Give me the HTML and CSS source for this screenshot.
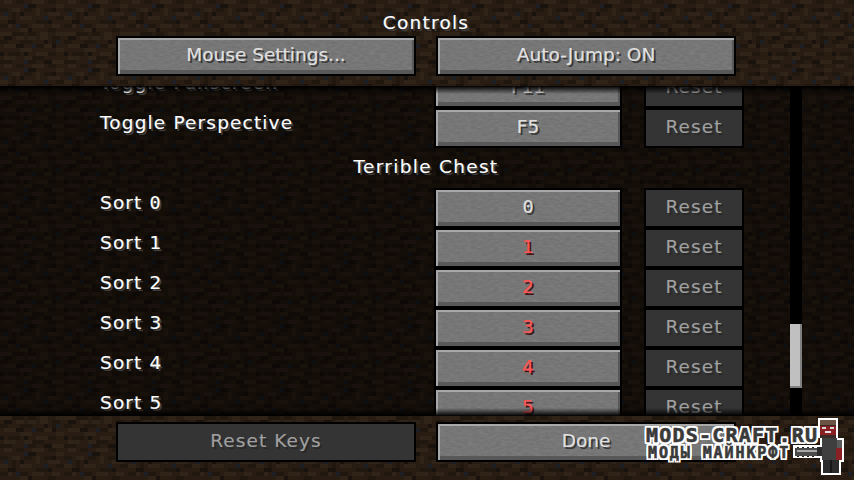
FILE: index.html
```html
<!DOCTYPE html>
<html lang="en">
  <head>
    <meta charset="UTF-8" />
    <title>Controls</title>
    <link rel="stylesheet" href="styles.css">
  </head>

  <body>
    <!-- 16x16 dirt tile, each cell is 4px on screen -->
    <svg class="dirt" width="854" height="480" aria-hidden="true">
      <defs>
        <pattern id="dirt-tile" width="64" height="64" patternUnits="userSpaceOnUse">
          <g transform="scale(4)" shape-rendering="crispEdges">
            <rect width="16" height="16" fill="#281c13" />
            <path fill="#302318" d="M1 0h2v1h-2zM8 0h3v1h-3zM14 1h2v1h-2zM3 2h2v1h-2zM9 2h1v2h-1zM12 3h3v1h-3zM0 4h2v1h-2zM5 4h3v1h-3zM2 6h1v1h-1zM8 6h3v1h-3zM13 6h2v1h-2zM5 7h2v1h-2zM0 8h3v1h-3zM10 8h2v2h-2zM14 8h2v1h-2zM4 9h2v1h-2zM7 9h2v1h-2zM1 11h3v1h-3zM11 11h2v1h-2zM5 12h3v1h-3zM14 12h2v1h-2zM9 13h3v1h-3zM1 14h3v1h-3zM6 14h2v1h-2zM13 15h3v1h-3z" />
            <path fill="#20170f" d="M4 0h2v1h-2zM12 0h2v1h-2zM0 2h2v1h-2zM6 2h2v1h-2zM11 2h2v1h-2zM3 3h1v2h-1zM14 4h2v1h-2zM9 5h3v1h-3zM0 6h2v1h-2zM5 6h2v1h-2zM12 7h2v1h-2zM3 8h3v1h-3zM7 8h2v1h-2zM13 9h2v2h-2zM0 10h2v1h-2zM5 10h3v1h-3zM9 11h2v1h-2zM2 13h3v1h-3zM12 13h2v1h-2zM8 14h3v1h-3zM0 15h3v1h-3zM7 15h2v1h-2z" />
            <path fill="#1a120c" d="M7 1h2v1h-2zM13 2h1v1h-1zM5 3h1v1h-1zM2 5h2v1h-2zM12 5h1v1h-1zM7 7h1v1h-1zM1 9h2v1h-2zM11 10h1v1h-1zM4 11h2v1h-2zM13 11h1v1h-1zM0 13h1v1h-1zM6 13h1v1h-1zM11 15h2v1h-2z" />
            <path fill="#1c1f25" d="M6 1h1v1h-1zM1 3h1v1h-1zM11 4h1v1h-1zM4 6h1v1h-1zM14 10h1v1h-1zM8 11h1v1h-1zM6 15h1v1h-1z" />
          </g>
        </pattern>
        <!-- stone mottling for the enabled buttons -->
        <filter id="stone-grain" x="0" y="0" width="100%" height="100%">
          <feTurbulence type="fractalNoise" baseFrequency="0.18 0.45" numOctaves="2" seed="7" />
          <feColorMatrix type="matrix" values="0 0 0 0 0.28  0 0 0 0 0.28  0 0 0 0 0.28  0.7 0 0 0 -0.2" />
        </filter>
      </defs>
      <rect width="854" height="480" fill="url(#dirt-tile)" />
    </svg>

    <div class="screen">
      <header class="top-bar">
        <h1 class="screen-title">Controls</h1>
        <div class="button-pair">
          <div class="mc-button">Mouse Settings...</div>
          <div class="mc-button">Auto-Jump: ON</div>
        </div>
      </header>

      <main class="key-list">
        <div class="key-rows">
          <div class="key-row">
            <span class="key-label">Toggle Fullscreen</span>
            <div class="mc-button">F11</div>
            <div class="mc-button disabled">Reset</div>
          </div>
          <div class="key-row">
            <span class="key-label">Toggle Perspective</span>
            <div class="mc-button">F5</div>
            <div class="mc-button disabled">Reset</div>
          </div>
          <div class="key-section">Terrible Chest</div>
          <div class="key-row">
            <span class="key-label">Sort <span class="zero">0</span></span>
            <div class="mc-button"><span class="zero">0</span></div>
            <div class="mc-button disabled">Reset</div>
          </div>
          <div class="key-row">
            <span class="key-label">Sort 1</span>
            <div class="mc-button conflict">1</div>
            <div class="mc-button disabled">Reset</div>
          </div>
          <div class="key-row">
            <span class="key-label">Sort 2</span>
            <div class="mc-button conflict">2</div>
            <div class="mc-button disabled">Reset</div>
          </div>
          <div class="key-row">
            <span class="key-label">Sort 3</span>
            <div class="mc-button conflict">3</div>
            <div class="mc-button disabled">Reset</div>
          </div>
          <div class="key-row">
            <span class="key-label">Sort 4</span>
            <div class="mc-button conflict">4</div>
            <div class="mc-button disabled">Reset</div>
          </div>
          <div class="key-row">
            <span class="key-label">Sort 5</span>
            <div class="mc-button conflict">5</div>
            <div class="mc-button disabled">Reset</div>
          </div>
        </div>
        <div class="scroll-track">
          <div class="scroll-thumb"></div>
        </div>
      </main>

      <footer class="bottom-bar">
        <div class="button-pair">
          <div class="mc-button disabled">Reset Keys</div>
          <div class="mc-button">Done</div>
        </div>
      </footer>
    </div>

    <!-- site watermark on top of the screenshot -->
    <div class="watermark">
      <div class="watermark-site">MODS-CRAFT.RU</div>
      <div class="watermark-sub">МОДЫ МАЙНКРФТ</div>
      <svg class="watermark-figure" width="56" height="58" viewBox="0 0 56 58" aria-hidden="true">
        <g shape-rendering="crispEdges">
          <!-- white sticker edge -->
          <g fill="#fff">
            <rect x="29" y="0" width="20" height="20" />
            <rect x="31" y="20" width="24" height="24" />
            <rect x="32" y="44" width="20" height="13" />
            <rect x="4" y="27" width="30" height="13" />
          </g>
          <!-- head -->
          <rect x="31" y="2" width="16" height="18" fill="#3a2a25" />
          <rect x="31" y="2" width="16" height="5" fill="#6b5443" />
          <rect x="31" y="8" width="16" height="9" fill="#8a2024" />
          <rect x="33" y="9" width="4" height="2" fill="#d9d9d9" />
          <rect x="41" y="9" width="4" height="2" fill="#d9d9d9" />
          <rect x="36" y="13" width="6" height="2" fill="#e5e5e5" />
          <!-- body and arm -->
          <rect x="33" y="20" width="15" height="22" fill="#3f3f3f" />
          <rect x="48" y="22" width="5" height="20" fill="#5a5a5a" />
          <rect x="47" y="30" width="6" height="12" fill="#8a2024" />
          <!-- legs -->
          <rect x="34" y="42" width="16" height="13" fill="#2b2b2b" />
          <rect x="41" y="42" width="2" height="13" fill="#161616" />
          <!-- chainsaw -->
          <rect x="6" y="30" width="24" height="8" fill="#4a4a4a" />
          <rect x="8" y="32" width="20" height="2" fill="#a8a8a8" />
          <path fill="#222" d="M8 29h2v1h-2zM13 29h2v1h-2zM18 29h2v1h-2zM23 29h2v1h-2zM8 38h2v1h-2zM13 38h2v1h-2zM18 38h2v1h-2zM23 38h2v1h-2z" />
          <rect x="28" y="29" width="5" height="9" fill="#2b2b2b" />
        </g>
      </svg>
    </div>
  </body>
</html>
```

FILE: styles.css
```css
body {
  margin: 0;
  width: 854px;
  height: 480px;
  overflow: hidden;
  background: #281c13;
  font-family: "DejaVu Sans", sans-serif;
  font-size: 18.5px;
  color: #fff;
  -webkit-text-stroke: 0.15px;
}

.dirt {
  position: absolute;
  top: 0;
  left: 0;
}

.screen {
  position: relative;
  display: flex;
  flex-direction: column;
  height: 480px;
}

.zero {
  font-family: "DejaVu Sans Mono", monospace;
}

/* header and footer */
.top-bar {
  height: 86px;
  flex-shrink: 0;
}

.screen-title {
  margin: 0;
  width: 852px;
  height: 36px;
  padding-top: 12px;
  box-sizing: border-box;
  text-align: center;
  font-size: inherit;
  font-weight: normal;
  line-height: 22px;
  letter-spacing: 1.25px;
  text-shadow: 2px 2px 0 #3f3f3f;
}

.bottom-bar {
  height: 64px;
  flex-shrink: 0;
  padding-top: 6px;
  box-sizing: border-box;
}

.button-pair {
  display: grid;
  grid-template-columns: 300px 300px;
  column-gap: 20px;
  margin-left: 116px;
}

/* buttons */
.mc-button {
  position: relative;
  isolation: isolate;
  display: flex;
  align-items: center;
  justify-content: center;
  height: 40px;
  box-sizing: border-box;
  padding-bottom: 3px;
  border: 2px solid #000;
  color: #e0e0e0;
  text-shadow: 2px 2px 0 #383838;
  background-color: #727272;
  box-shadow: inset 2px 2px 0 #a8a8a8, inset -2px -4px 0 #585858;
}

.mc-button::before {
  content: "";
  position: absolute;
  top: 2px;
  left: 2px;
  right: 2px;
  bottom: 4px;
  z-index: -1;
  filter: url(#stone-grain);
}

.mc-button.disabled {
  letter-spacing: 1.1px;
  color: #a0a0a0;
  text-shadow: 2px 2px 0 #282828;
  background-color: #343434;
  box-shadow: none;
}

.mc-button.disabled::before {
  display: none;
}

.mc-button.conflict {
  color: #ff5555;
  text-shadow: 2px 2px 0 #3f1515;
}

/* key list */
.key-list {
  position: relative;
  display: flex;
  flex: 1;
  overflow: hidden;
  background: rgba(0, 0, 0, 0.5);
}

.key-list::before,
.key-list::after {
  content: "";
  position: absolute;
  left: 0;
  right: 0;
  height: 8px;
  z-index: 1;
}

.key-list::before {
  top: 0;
  background: linear-gradient(#000, transparent);
}

.key-list::after {
  bottom: 0;
  background: linear-gradient(transparent, #000);
}

.key-rows {
  width: 652px;
  margin-top: -18px;
  margin-left: 100px;
}

.key-row {
  display: grid;
  grid-template-columns: 334px 188px 122px;
  height: 40px;
}

.key-row .mc-button:last-child {
  margin-left: 22px;
  width: 100px;
}

.key-label {
  padding-top: 4px;
  line-height: 22px;
  letter-spacing: 1.15px;
  text-shadow: 2px 2px 0 #3f3f3f;
}

.key-section {
  height: 40px;
  padding-top: 8px;
  box-sizing: border-box;
  line-height: 22px;
  text-align: center;
  letter-spacing: 1.3px;
  text-shadow: 2px 2px 0 #3f3f3f;
}

.scroll-track {
  width: 12px;
  margin-left: 38px;
  background: #000;
}

.scroll-thumb {
  height: 64px;
  margin-top: 238px;
  background: #c0c0c0;
  box-shadow: inset -2px -2px 0 #808080;
}

/* watermark */
.watermark {
  position: absolute;
  left: 646px;
  top: 426px;
  width: 200px;
  height: 54px;
  font-family: "DejaVu Sans Mono", monospace;
  font-weight: bold;
  color: #3a3a3a;
  -webkit-text-stroke: 0.6px #3a3a3a;
  text-shadow: 2px 0 0 #fff, -2px 0 0 #fff, 0 2px 0 #fff, 0 -2px 0 #fff, 2px 2px 0 #fff, -2px 2px 0 #fff, 2px -2px 0 #fff, -2px -2px 0 #fff;
}

.watermark-site {
  font-size: 20px;
  line-height: 19px;
  letter-spacing: 1.2px;
}

.watermark-sub {
  margin-top: 1px;
  margin-left: 2px;
  font-size: 15px;
  line-height: 14px;
  letter-spacing: 1.9px;
}

.watermark-figure {
  position: absolute;
  left: 143px;
  top: -8px;
}
```
